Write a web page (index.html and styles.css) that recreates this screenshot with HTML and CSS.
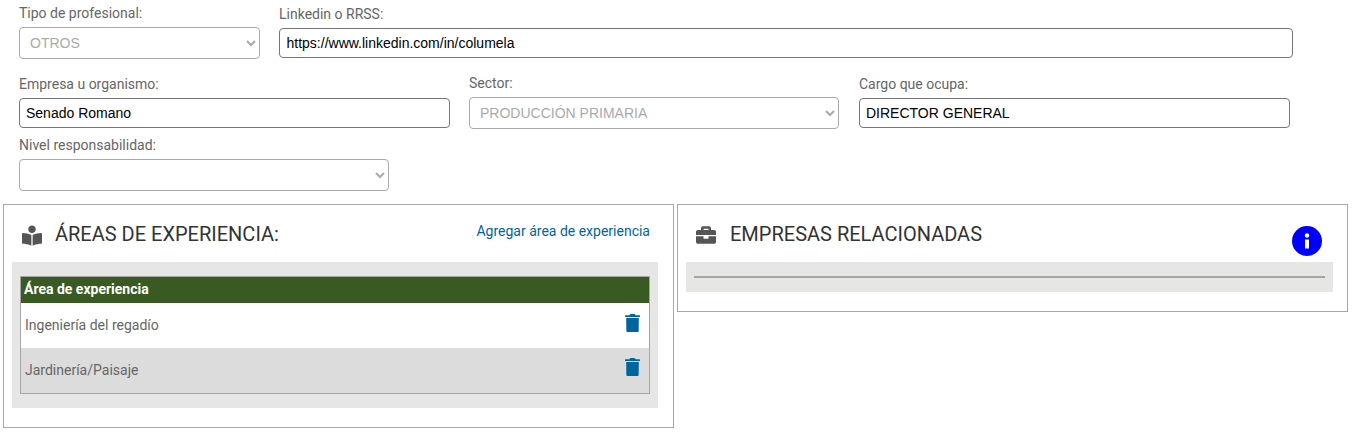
FILE: index.html
```html
<!DOCTYPE html>
<html lang="es">
<head>
  <meta charset="UTF-8" />
  <title>Perfil profesional</title>
  <link rel="stylesheet" href="styles.css">
</head>
<body>
  <div class="form-row row-first">
    <div class="field w-tipo">
      <label>Tipo de profesional:</label>
      <select class="sel" disabled><option>OTROS</option></select>
    </div>
    <div class="field w-linkedin">
      <label class="label-low">Linkedin o RRSS:</label>
      <input class="inp" type="text" value="https://www.linkedin.com/in/columela" />
    </div>
  </div>

  <div class="form-row row-second">
    <div class="field w-empresa">
      <label class="label-low">Empresa u organismo:</label>
      <input class="inp" type="text" value="Senado Romano" />
    </div>
    <div class="field w-sector">
      <label>Sector:</label>
      <select class="sel" disabled><option>PRODUCCIÓN PRIMARIA</option></select>
    </div>
    <div class="field w-cargo">
      <label class="label-low">Cargo que ocupa:</label>
      <input class="inp" type="text" value="DIRECTOR GENERAL" />
    </div>
  </div>

  <div class="form-row row-third">
    <div class="field w-nivel">
      <label>Nivel responsabilidad:</label>
      <select class="sel"><option></option></select>
    </div>
  </div>

  <div class="panels">
    <section class="panel">
      <div class="panel-head">
        <svg class="panel-icon icon-book" viewBox="0 0 512 512"><path d="M352 96c0-53.02-42.98-96-96-96s-96 42.98-96 96 42.98 96 96 96 96-42.98 96-96zM233.59 241.1c-59.33-36.32-155.43-46.3-203.79-49.05C13.55 191.13 0 203.51 0 219.14v222.8c0 14.33 11.59 26.28 26.49 27.05 43.66 2.29 131.99 10.68 193.04 41.43 9.37 4.72 20.48-1.71 20.48-11.87V252.56c-.01-4.67-2.32-8.95-6.42-11.46zm248.61-49.05c-48.35 2.74-144.46 12.73-203.78 49.05-4.1 2.51-6.41 6.96-6.41 11.63v245.79c0 10.19 11.14 16.63 20.54 11.9 61.04-30.72 149.32-39.11 192.97-41.4 14.9-.78 26.49-12.73 26.49-27.06V219.14c-.01-15.63-13.56-28.01-29.81-27.09z"/></svg>
        <h3 class="title-book">ÁREAS DE EXPERIENCIA:</h3>
        <a class="add-link" href="#">Agregar área de experiencia</a>
      </div>
      <div class="panel-body">
        <table class="grid">
          <thead>
            <tr><th colspan="2">Área de experiencia</th></tr>
          </thead>
          <tbody>
            <tr>
              <td>Ingeniería del regadío</td>
              <td class="cell-action">
                <svg class="trash" viewBox="0 0 448 512" preserveAspectRatio="none"><path d="M432 32H312l-9.4-18.7A24 24 0 0 0 281.1 0H166.8a23.72 23.72 0 0 0-21.4 13.3L136 32H16A16 16 0 0 0 0 48v24a16 16 0 0 0 16 16h416a16 16 0 0 0 16-16V48a16 16 0 0 0-16-16zM36 112l4 368a32 32 0 0 0 32 32h304a32 32 0 0 0 32-32l4-368z"/></svg>
              </td>
            </tr>
            <tr class="alt">
              <td>Jardinería/Paisaje</td>
              <td class="cell-action">
                <svg class="trash" viewBox="0 0 448 512" preserveAspectRatio="none"><path d="M432 32H312l-9.4-18.7A24 24 0 0 0 281.1 0H166.8a23.72 23.72 0 0 0-21.4 13.3L136 32H16A16 16 0 0 0 0 48v24a16 16 0 0 0 16 16h416a16 16 0 0 0 16-16V48a16 16 0 0 0-16-16zM36 112l4 368a32 32 0 0 0 32 32h304a32 32 0 0 0 32-32l4-368z"/></svg>
              </td>
            </tr>
          </tbody>
        </table>
      </div>
    </section>

    <section class="panel">
      <div class="panel-head">
        <svg class="panel-icon" viewBox="0 0 512 512"><path d="M320 336c0 8.84-7.16 16-16 16h-96c-8.84 0-16-7.16-16-16v-48H0v144c0 25.6 22.4 48 48 48h416c25.6 0 48-22.4 48-48V288H320v48zm144-208h-80V80c0-25.6-22.4-48-48-48H176c-25.6 0-48 22.4-48 48v48H48c-25.6 0-48 22.4-48 48v80h512v-80c0-25.6-22.4-48-48-48zm-144 0H192V96h128v32z"/></svg>
        <h3>EMPRESAS RELACIONADAS</h3>
        <svg class="info" viewBox="0 0 30 30">
          <circle cx="15" cy="15" r="15" fill="#0000ff"/>
          <circle cx="15" cy="9.5" r="2.2" fill="#fff"/>
          <rect x="13" y="13.5" width="4" height="9" fill="#fff"/>
        </svg>
      </div>
      <div class="panel-body body-empty">
        <div class="empty-line"></div>
      </div>
    </section>
  </div>
</body>
</html>
```

FILE: styles.css
```css
html, body {
  height: 100%;
}
body {
  margin: 0;
  background: #fff;
  font-family: Roboto, sans-serif;
  font-size: 14px;
  color: #666;
  overflow: hidden;
}

/* form */
.form-row {
  display: flex;
  gap: 19px;
  padding-left: 19px;
}
.row-first {
  padding-top: 5px;
}
.row-second {
  margin-top: 16px;
}
.row-third {
  margin-top: 8px;
}
.field label {
  display: block;
  height: 22px;
  line-height: 17px;
}
.field .label-low {
  height: 23px;
  padding-top: 1px;
  box-sizing: border-box;
}
.w-tipo { width: 241px; }
.w-linkedin { width: 1014px; }
.w-linkedin .inp { padding-left: 6.5px; }
.w-empresa { width: 431px; }
.w-sector { width: 370px; }
.w-cargo { width: 431px; margin-left: 1px; }
.w-nivel { width: 370px; }

.inp, .sel {
  display: block;
  width: 100%;
  box-sizing: border-box;
  font-family: "Liberation Sans", Arial, sans-serif;
  font-size: 14px;
  border-radius: 4px;
  background: #fff;
  outline: none;
}
.inp {
  height: 30px;
  padding: 0 6px;
  border: 1px solid #767676;
  color: #000;
}
.sel {
  height: 32px;
  padding: 0 6px;
  border: 1px solid #aaa;
  color: #aaa;
  opacity: 1;
}

/* panels */
.panels {
  display: flex;
  gap: 3px;
  align-items: flex-start;
  padding: 13px 0 0 3px;
}
.panel {
  width: 671px;
  box-sizing: border-box;
  border: 1px solid #a6a6a6;
  padding: 0 8px 19px;
}
.panel-head {
  display: flex;
  align-items: flex-start;
  height: 57px;
}
.panel-icon {
  width: 20px;
  height: 20px;
  margin: 20px 0 0 10px;
  fill: #555;
}
.icon-book {
  height: 21px;
  margin-top: 20px;
}
.panel-head h3 {
  margin: 17px 0 0 14px;
  font-size: 20px;
  font-weight: 400;
  line-height: 24px;
  color: #333;
}
.panel-head .title-book {
  margin-left: 13px;
}
.add-link {
  margin: 18px 15px 0 auto;
  color: #00659c;
  text-decoration: none;
  line-height: 17px;
}
.info {
  width: 30px;
  height: 30px;
  margin: 21px 17px 0 auto;
}
.panel-body {
  background: #e6e7e5;
  padding: 14px 8px;
  margin-right: 7px;
}
.body-empty {
  height: 30px;
  box-sizing: border-box;
  padding-bottom: 0;
  margin-right: 6px;
}
.empty-line {
  height: 2px;
  background: #a6a6a1;
}

/* table */
.grid {
  width: 100%;
  border-collapse: collapse;
  border: 1px solid #a6a6a6;
  background: #fff;
}
.grid th {
  height: 26px;
  padding: 0 3px 2px;
  background: #3a5a24;
  color: #fff;
  font-weight: 700;
  text-align: left;
  box-sizing: border-box;
}
.grid td {
  height: 45px;
  padding: 0 4px;
  box-sizing: border-box;
}
.grid .alt td {
  height: 46px;
  padding-bottom: 1px;
  background: #dcdcdc;
}
.cell-action {
  width: 40px;
}
.trash {
  display: block;
  width: 15px;
  height: 18px;
  margin: -5px 5px 0 auto;
  fill: #00659c;
}
```
